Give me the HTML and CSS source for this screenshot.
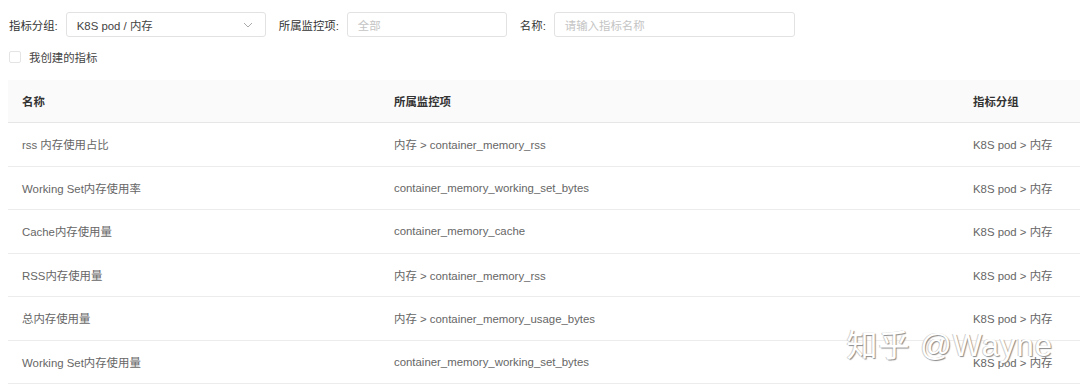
FILE: index.html
```html
<!DOCTYPE html>
<html lang="zh-CN">
<head>
  <meta charset="UTF-8">
  <meta name="viewport" content="width=device-width, initial-scale=1.0">
  <title>指标列表</title>
  <link rel="stylesheet" href="styles.css">
</head>
<body>
  <div id="main">
    <div class="filters">
      <label class="field">
        <span class="field-label">指标分组:</span>
        <span class="select">
          <span class="select-value">K8S pod / 内存</span>
          <svg class="arrow" width="10" height="6" viewBox="0 0 10 6"><path d="M1 1 L5 5 L9 1" fill="none" stroke="#aaa" stroke-width="1"/></svg>
        </span>
      </label>
      <label class="field">
        <span class="field-label">所属监控项:</span>
        <span class="input monitor">全部</span>
      </label>
      <label class="field">
        <span class="field-label">名称:</span>
        <span class="input name">请输入指标名称</span>
      </label>
    </div>
    <label class="mine">
      <span class="checkbox"></span>
      <span>我创建的指标</span>
    </label>
    <div class="table">
      <div class="row head">
        <div>名称</div>
        <div>所属监控项</div>
        <div>指标分组</div>
      </div>
      <div class="row">
        <div>rss 内存使用占比</div>
        <div>内存 &gt; container_memory_rss</div>
        <div>K8S pod &gt; 内存</div>
      </div>
      <div class="row">
        <div>Working Set内存使用率</div>
        <div>container_memory_working_set_bytes</div>
        <div>K8S pod &gt; 内存</div>
      </div>
      <div class="row">
        <div>Cache内存使用量</div>
        <div>container_memory_cache</div>
        <div>K8S pod &gt; 内存</div>
      </div>
      <div class="row">
        <div>RSS内存使用量</div>
        <div>内存 &gt; container_memory_rss</div>
        <div>K8S pod &gt; 内存</div>
      </div>
      <div class="row">
        <div>总内存使用量</div>
        <div>内存 &gt; container_memory_usage_bytes</div>
        <div>K8S pod &gt; 内存</div>
      </div>
      <div class="row">
        <div>Working Set内存使用量</div>
        <div>container_memory_working_set_bytes</div>
        <div>K8S pod &gt; 内存</div>
      </div>
    </div>
    <div class="watermark">知乎 @Wayne</div>
  </div>
</body>
</html>
```

FILE: styles.css
```css
body {
  margin: 0;
  background: #fff;
  font-family: "Liberation Sans", "Noto Sans CJK SC", sans-serif;
  font-size: 11.4px;
  color: #333;
}
#main {
  position: relative;
  padding: 12px 0 0 8px;
  height: 389px;
  box-sizing: border-box;
  overflow: hidden;
}
.filters {
  display: flex;
  align-items: center;
  height: 25px;
}
.field {
  display: flex;
  align-items: center;
  margin-right: 12px;
}
.field-label {
  padding-left: 1px;
  margin-right: 8px;
  color: #333;
}
.select,
.input {
  box-sizing: border-box;
  height: 25px;
  border: 1px solid #e2e2e2;
  border-radius: 3px;
  display: flex;
  align-items: center;
  padding: 0 10px;
}
.select {
  width: 200px;
  justify-content: space-between;
  color: #444;
}
.arrow {
  margin-right: 2px;
}
.input {
  color: #c4c4c4;
}
.input.monitor {
  width: 160px;
}
.input.name {
  width: 241px;
}
.mine {
  display: flex;
  align-items: center;
  margin-top: 12px;
  color: #444;
}
.checkbox {
  width: 12px;
  height: 12px;
  box-sizing: border-box;
  border: 1px solid #e4e4e4;
  border-radius: 2px;
  margin: 0 8px 0 1px;
}
.table {
  margin-top: 15px;
}
.row {
  display: grid;
  grid-template-columns: 372px 579px auto;
  align-items: center;
  height: 43.5px;
  box-sizing: border-box;
  border-bottom: 1px solid #ececec;
  padding-left: 14px;
  color: #666;
}
.row.head {
  height: 43px;
  background: #fafafa;
  border-bottom: 1px solid #e6e6e6;
  color: #333;
  font-weight: bold;
}
.watermark {
  position: absolute;
  right: 27px;
  top: 320px;
  font-size: 31px;
  color: #fff;
  text-shadow: 1px 1px 1px #8a8a8a, -1px 0 0 #d0d0d0;
  letter-spacing: 1px;
}
```
